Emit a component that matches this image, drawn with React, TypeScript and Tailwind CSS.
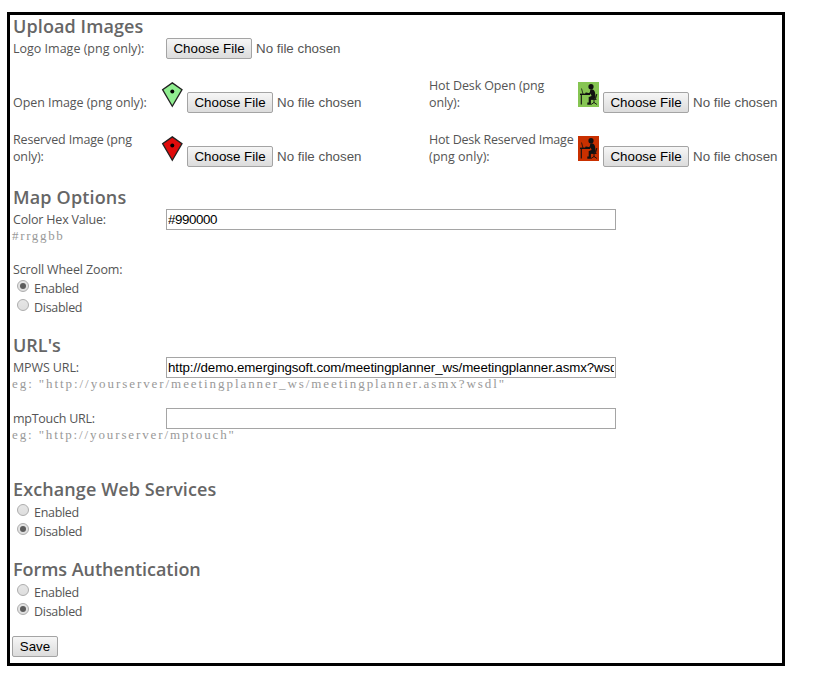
import type { ReactNode } from "react";

const label = "font-['Open_Sans',sans-serif] text-[12.5px] leading-[17px] text-[#555] whitespace-nowrap";

function Heading({ children, track }: { children: ReactNode; track: string }) {
  return (
    <h2 className={`h-[23px] pl-[3px] font-['Open_Sans',sans-serif] text-[18px] leading-[23px] font-semibold text-[#666] whitespace-nowrap ${track}`}>
      {children}
    </h2>
  );
}

function Button({ children, width }: { children: ReactNode; width: string }) {
  return (
    <button
      type="button"
      className={`h-[21px] shrink-0 rounded-[2px] border border-[#a4a4a4] bg-linear-to-b from-[#f6f6f6] to-[#dcdcdc] text-[13.33px] leading-[19px] whitespace-nowrap text-black ${width}`}
    >
      {children}
    </button>
  );
}

function FilePicker() {
  return (
    <div className="flex h-[21px] shrink-0 items-center gap-1">
      <Button width="w-[86px]">Choose File</Button>
      <span className="text-[13.33px] leading-[21px] whitespace-nowrap text-[#555]">No file chosen</span>
    </div>
  );
}

function Pin({ fill }: { fill: string }) {
  return (
    <svg width="22" height="27" viewBox="0 0 22 27" className="-ml-px mr-px shrink-0">
      <path d="M11.3 1.9 21 8.6 11.3 25.3 1.6 8.6Z" fill={fill} stroke="#222" strokeWidth="1.3" />
      <circle cx="11.3" cy="10.4" r="2" fill="#000" />
    </svg>
  );
}

function Desk({ fill }: { fill: string }) {
  return (
    <svg width="21" height="25" viewBox="0 0 21 25" className="shrink-0">
      <rect width="21" height="25" fill={fill} />
      <g fill="none" stroke="#111">
        <path d="M3.5 6.5 5 12" strokeWidth="0.8" />
        <path d="M2 12.3H12" strokeWidth="1.4" />
        <path d="M3.3 13V22.5" strokeWidth="1.1" />
        <path d="M13.2 9.5 11.5 12 8 11.3" strokeWidth="1.6" strokeLinecap="round" />
        <path d="M17.5 17 18.8 12" strokeWidth="1" />
        <path d="M12 17.5H18.5M16 17.5V21M13 22.5 16 20.5 19 22.5" strokeWidth="0.9" />
        <path d="M15 16H11.8V21.7H9.3" strokeWidth="2.2" />
      </g>
      <path d="M12.3 7.6C14 6.8 16.5 8 17 10.5L17.8 15.5 16.5 17H11.5V14.8L13.6 14 12 10Z" fill="#111" />
      <circle cx="13" cy="4.7" r="2.6" fill="#111" />
    </svg>
  );
}

function UploadRow({ left, pin, right, desk }: { left: ReactNode; pin: string; right: ReactNode; desk: string }) {
  return (
    <div className="flex h-[54px] pl-[3px]">
      <div className="flex h-[34px] w-[149px] shrink-0 items-end">{left}</div>
      <div className="flex w-[267px] shrink-0 gap-[3px]">
        <div className="pt-1"><Pin fill={pin} /></div>
        <div className="pt-[15px]"><FilePicker /></div>
      </div>
      <div className="w-[149px] shrink-0">{right}</div>
      <div className="flex gap-1">
        <div className="pt-[5px]"><Desk fill={desk} /></div>
        <div className="pt-[15px]"><FilePicker /></div>
      </div>
    </div>
  );
}

function TextRow({ name, track, value, valueTrack }: { name: string; track: string; value: string; valueTrack: string }) {
  return (
    <div className="flex h-[21px] items-center pl-[3px]">
      <span className={`w-[153px] shrink-0 ${label} ${track}`}>{name}</span>
      <input
        readOnly
        defaultValue={value}
        className={`h-[21px] w-[450px] border border-[#a5a5a5] bg-white px-px text-[13.33px] text-black outline-none ${valueTrack}`}
      />
    </div>
  );
}

function Hint({ children, track }: { children: ReactNode; track: string }) {
  return (
    <div className={`h-[13px] pl-[2px] font-['Liberation_Serif',serif] text-[13px] leading-[11px] whitespace-nowrap text-[#999] ${track}`}>
      {children}
    </div>
  );
}

function Radio({ text, checked }: { text: string; checked?: boolean }) {
  return (
    <div className="flex h-[19px] pl-[7px]">
      <span className="mt-px flex size-3 shrink-0 items-center justify-center rounded-full border border-[#adadad] bg-linear-to-b from-[#e6e6e6] to-[#dedede]">
        {checked && <span className="size-[6px] rounded-full bg-[#5c5c5c]" />}
      </span>
      <span className={`pt-px pl-[5px] ${label} tracking-[-0.3px]`}>{text}</span>
    </div>
  );
}

export default function App() {
  return (
    <div className="h-[676px] w-[839px] bg-white pt-3 pl-[7px] font-['Liberation_Sans',Arial,sans-serif]">
      <main className="flex h-[654px] w-[778px] flex-col border-[3px] border-black">
        <Heading track="tracking-[0.1px]">Upload Images</Heading>
        <div className="flex h-[39px] pl-[3px]">
          <span className={`w-[153px] shrink-0 pt-[2px] ${label}`}>Logo Image (png only):</span>
          <FilePicker />
        </div>
        <UploadRow
          left={<span className={`${label} tracking-[-0.06px]`}>Open Image (png only):</span>}
          pin="#90ee90"
          right={<p className={`${label} tracking-[-0.12px]`}>Hot Desk Open (png<br />only):</p>}
          desk="#86c552"
        />
        <UploadRow
          left={<p className={`${label} tracking-[-0.15px]`}>Reserved Image (png<br />only):</p>}
          pin="#e00b0b"
          right={<p className={`${label} tracking-[-0.2px]`}>Hot Desk Reserved Image<br /><span className="tracking-normal">(png only):</span></p>}
          desk="#c93000"
        />
        <div className="pt-px">
          <Heading track="tracking-[0.16px]">Map Options</Heading>
          <TextRow name="Color Hex Value:" track="tracking-[-0.19px]" value="#990000" valueTrack="tracking-[-0.42px]" />
          <Hint track="tracking-[1.65px]">#rrggbb</Hint>
        </div>
        <div className="pt-[18px]">
          <div className={`h-[18px] pl-[3px] ${label} tracking-[-0.13px]`}>Scroll Wheel Zoom:</div>
          <Radio text="Enabled" checked />
          <Radio text="Disabled" />
        </div>
        <div className="pt-[17px]">
          <Heading track="tracking-[0px]">URL's</Heading>
          <TextRow
            name="MPWS URL:"
            track="tracking-[-0.12px]"
            value="http://demo.emergingsoft.com/meetingplanner_ws/meetingplanner.asmx?wsdl"
            valueTrack="tracking-[-0.11px]"
          />
          <Hint track="tracking-[1.93px]">eg: "http://yourserver/meetingplanner_ws/meetingplanner.asmx?wsdl"</Hint>
        </div>
        <div className="pt-[17px]">
          <TextRow name="mpTouch URL:" track="tracking-[-0.25px]" value="" valueTrack="tracking-normal" />
          <Hint track="tracking-[1.88px]">eg: "http://yourserver/mptouch"</Hint>
        </div>
        <div className="pt-9">
          <Heading track="tracking-[0.1px]">Exchange Web Services</Heading>
          <div className="pt-[2px]">
            <Radio text="Enabled" />
            <Radio text="Disabled" checked />
          </div>
        </div>
        <div className="pt-[17px]">
          <Heading track="tracking-[-0.05px]">Forms Authentication</Heading>
          <div className="pt-[2px]">
            <Radio text="Enabled" />
            <Radio text="Disabled" checked />
          </div>
        </div>
        <div className="flex pt-[15px] pl-[2px]">
          <Button width="w-[46px]">Save</Button>
        </div>
      </main>
    </div>
  );
}
